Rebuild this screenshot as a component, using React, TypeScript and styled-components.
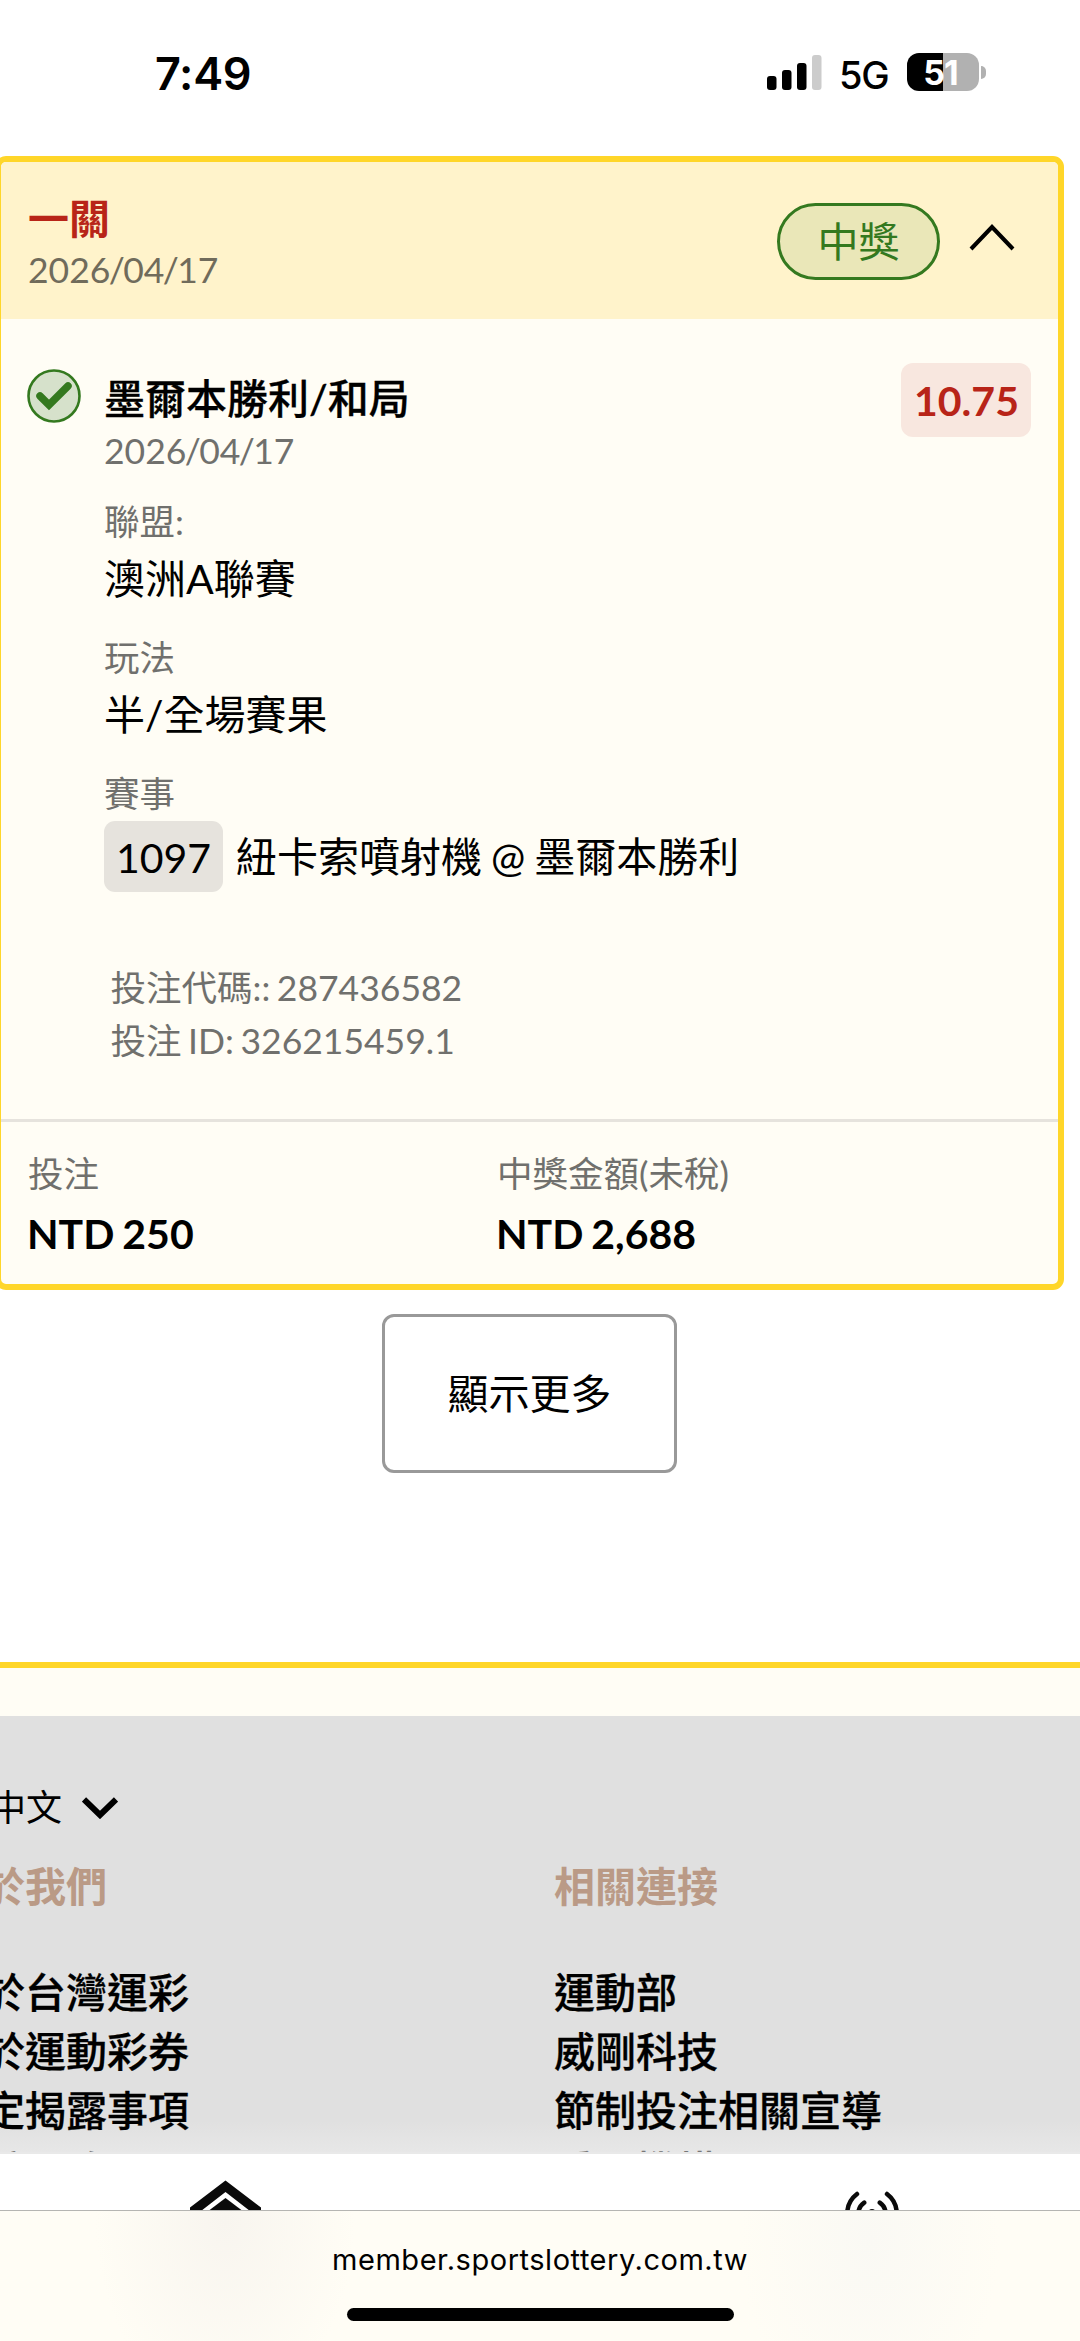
import React from 'react';
import styled, { createGlobalStyle } from 'styled-components';

const cjk = `Lato, "Noto Sans CJK TC", sans-serif`;
const system = `Inter, "Noto Sans CJK TC", sans-serif`;

const GlobalStyle = createGlobalStyle`
  * { box-sizing: border-box; }
  html, body { margin: 0; padding: 0; background: #fff; }
  body { width: 1080px; height: 2341px; overflow: hidden; font-family: ${cjk}; color: #000; }
  p, h2, h3, ul, dl, dt, dd { margin: 0; padding: 0; font-weight: 400; }
  ul { list-style: none; }
`;

const Screen = styled.div`
  width: 1080px;
  height: 2341px;
  display: flex;
  flex-direction: column;
  overflow: hidden;
  background: #fff;
`;

/* Status bar */
const StatusBar = styled.header`
  height: 156px;
  flex: none;
  display: flex;
  justify-content: space-between;
  padding: 48px 94px 0 155px;
  font-family: ${system};
`;
const Clock = styled.time`
  font-size: 45px;
  line-height: 52px;
  font-weight: 600;
  letter-spacing: -0.3px;
`;
const StatusIcons = styled.div`
  display: flex;
  align-items: flex-start;
`;
const Signal = styled.svg`
  margin-top: 7px;
`;
const Network = styled.span`
  margin: 7px 0 0 17px;
  width: 68px;
  font-size: 38px;
  line-height: 40px;
  font-weight: 500;
  letter-spacing: -1.2px;
`;
const Battery = styled.div`
  margin-top: 5px;
  width: 72px;
  height: 38px;
  padding-right: 5px;
  border-radius: 12px;
  display: flex;
  align-items: center;
  justify-content: center;
  background: linear-gradient(90deg, #000 50%, #b1b1b1 50%);
  color: #fff;
  font-size: 34px;
  font-weight: 700;
  letter-spacing: -1px;
`;
const BatteryCap = styled.div`
  margin: 18px 0 0 2px;
  width: 5px;
  height: 13px;
  border-radius: 0 6px 6px 0;
  background: #b1b1b1;
`;

/* Ticket card */
const Card = styled.section`
  flex: none;
  width: 1069px;
  height: 1134px;
  margin-left: -5px;
  border: 6px solid #ffd629;
  border-radius: 11px;
  background: #fffdf5;
  overflow: hidden;
  display: flex;
  flex-direction: column;
`;
const CardHeader = styled.div`
  height: 157px;
  flex: none;
  display: flex;
  align-items: flex-start;
  padding: 33px 42px 0 27px;
  background: #fff3cb;
`;
const HeaderText = styled.div`
  flex: 1;
`;
const TicketType = styled.h2`
  font-size: 41px;
  line-height: 48px;
  font-weight: 700;
  color: #b82418;
`;
const DateText = styled.p<{ $onHeader?: boolean }>`
  font-size: 35.5px;
  height: 52px;
  line-height: 54px;
  color: ${(p) => (p.$onHeader ? '#706b5b' : '#70706d')};
`;
const Slash = styled.span`
  margin: 0 -1.6px;
`;
const StatusPill = styled.span`
  margin-top: 8px;
  width: 163px;
  height: 77px;
  border: 3px solid #34791f;
  border-radius: 39px;
  background: #eae7b8;
  color: #34791f;
  font-size: 41px;
  line-height: 71px;
  text-align: center;
`;
const CollapseIcon = styled.svg`
  margin: 27px 0 0 28px;
`;

const Selection = styled.div`
  display: flex;
  align-items: flex-start;
  padding: 49px 27px 0 26px;
`;
const SelectionBody = styled.div`
  flex: 1;
  padding: 6px 0 0 23px;
`;
const SelectionName = styled.h3`
  font-size: 41px;
  line-height: 50px;
  font-weight: 500;
  -webkit-text-stroke: 0.3px currentColor;
`;
const Odds = styled.span`
  margin-top: -5px;
  width: 130px;
  height: 74px;
  padding-left: 1px;
  border-radius: 12px;
  background: #f8e7df;
  color: #b82418;
  font-size: 41px;
  line-height: 76px;
  font-weight: 700;
  text-align: center;
`;
const Details = styled.dl`
  padding-top: 20px;
  display: flex;
  flex-direction: column;
`;
const Field = styled.div`
  height: 136px;
`;
const Label = styled.dt`
  font-size: 35.5px;
  line-height: 52px;
  color: #70706d;
`;
const Value = styled.dd`
  font-size: 41px;
  line-height: 62px;
`;
const Match = styled(Value)`
  display: flex;
  align-items: center;
  gap: 13px;
  margin-top: 1px;
  word-spacing: -1.5px;
`;
const EventCode = styled.span`
  width: 119px;
  height: 71px;
  flex: none;
  border-radius: 11px;
  background: #e6e3dd;
  text-align: center;
  line-height: 74px;
`;
const Codes = styled.div`
  margin: 69px 0 0 109.5px;
  font-size: 35.5px;
  line-height: 53px;
  word-spacing: -2.5px;
  color: #70706d;
  height: 158px;
`;
const Totals = styled.dl`
  flex: 1;
  display: flex;
  border-top: 3px solid #e6e3dd;
  padding: 26px 0 0 27px;
`;
const Total = styled.div`
  width: 469px;
`;
const Amount = styled.dd`
  font-size: 41px;
  line-height: 67px;
  font-weight: 700;
  word-spacing: -2px;
  margin-left: -1px;
`;

const MoreButton = styled.button`
  flex: none;
  margin: 24px 0 0 382px;
  width: 295px;
  height: 159px;
  padding: 0 0 5px;
  border: 3px solid #999;
  border-radius: 12px;
  background: #fff;
  font-family: ${cjk};
  font-size: 41px;
  color: #000;
`;

/* Footer */
const Strip = styled.div`
  flex: none;
  margin-top: 189px;
  height: 54px;
  border-top: 6px solid #ffd629;
  background: #fffdf5;
`;
const Footer = styled.footer`
  flex: none;
  height: 436px;
  overflow: hidden;
  padding: 63px 0 0;
  background: linear-gradient(#e0e0e0 0 405px, #e7e7e7 436px);
`;
const Language = styled.div`
  display: flex;
  align-items: center;
  gap: 20px;
  margin-left: -10px;
  height: 52px;
  font-size: 36px;
`;
const LanguageArrow = styled.svg`
  margin-top: 5px;
`;
const Columns = styled.div`
  display: grid;
  grid-template-columns: 611px 1fr;
  margin: 26px 0 0 -57px;
`;
const ColumnTitle = styled.h3`
  font-size: 41px;
  line-height: 60px;
  font-weight: 700;
  color: #ba9a86;
  white-space: nowrap;
`;
const Links = styled.ul`
  padding-top: 46px;
  font-size: 41px;
  line-height: 59px;
  font-weight: 500;
  -webkit-text-stroke: 0.3px currentColor;
`;
const LinkItem = styled.li<{ $faded: boolean }>`
  padding-top: ${(p) => (p.$faded ? '1px' : '0')};
  color: ${(p) => (p.$faded ? '#777' : '#000')};
`;

const TabBar = styled.nav`
  flex: none;
  height: 58px;
  overflow: hidden;
  border-top: 2px solid #e9e9e9;
  background: #fff;
  display: flex;
  justify-content: space-between;
  padding: 26px 181px 0 190px;
`;
const AddressBar = styled.div`
  flex: 1;
  display: flex;
  flex-direction: column;
  align-items: center;
  border-top: 1.5px solid #b5b5b2;
  background:
    radial-gradient(ellipse 130px 190px at 225px 10px, #f8f5ef, transparent),
    radial-gradient(ellipse 130px 190px at 870px 30px, #faf9f4, transparent),
    #fffdf5;
  padding-top: 29px;
  font-family: ${system};
`;
const Address = styled.span`
  font-size: 29px;
  line-height: 40px;
  letter-spacing: 0.53px;
`;
const HomeIndicator = styled.div`
  margin-top: 28px;
  width: 387px;
  height: 13px;
  border-radius: 7px;
  background: #000;
`;

const fields = [
  ['聯盟:', '澳洲A聯賽'],
  ['玩法', '半/全場賽果'],
];
const columns = [
  { title: '關於我們', links: ['關於台灣運彩', '關於運動彩券', '法定揭露事項', '客戶服務'] },
  { title: '相關連接', links: ['運動部', '威剛科技', '節制投注相關宣導', '愛心機構'] },
];

function TicketDate({ onHeader }: { onHeader?: boolean }) {
  return (
    <DateText $onHeader={onHeader}>
      2026<Slash>/</Slash>04<Slash>/</Slash>17
    </DateText>
  );
}

export default function App() {
  return (
    <>
      <GlobalStyle />
      <Screen>
        <StatusBar>
          <Clock>7:49</Clock>
          <StatusIcons>
            <Signal width="55" height="36" viewBox="0 0 55 36">
              <rect x="0" y="21" width="9.5" height="14" rx="3" />
              <rect x="15" y="15" width="9.5" height="20" rx="3" />
              <rect x="30" y="8" width="9.5" height="27" rx="3" />
              <rect x="45" y="0" width="9.5" height="35" rx="3" fill="#ccc" />
            </Signal>
            <Network>5G</Network>
            <Battery>51</Battery>
            <BatteryCap />
          </StatusIcons>
        </StatusBar>

        <Card>
          <CardHeader>
            <HeaderText>
              <TicketType>一關</TicketType>
              <TicketDate onHeader />
            </HeaderText>
            <StatusPill>中獎</StatusPill>
            <CollapseIcon width="48" height="30" viewBox="0 0 48 30" fill="none" stroke="#000" strokeWidth="4">
              <path d="M3 27 24 5 45 27" />
            </CollapseIcon>
          </CardHeader>

          <Selection>
            <svg width="54" height="56" viewBox="0 0 54 56" fill="none" stroke="#34791f">
              <circle cx="27" cy="28" r="25.5" fill="#d6e1cb" strokeWidth="2.6" />
              <path d="M13 28 22 37 41 18" strokeWidth="7.5" strokeLinecap="round" />
            </svg>
            <SelectionBody>
              <SelectionName>墨爾本勝利/和局</SelectionName>
              <TicketDate />
              <Details>
                {fields.map(([label, value]) => (
                  <Field key={label}>
                    <Label>{label}</Label>
                    <Value>{value}</Value>
                  </Field>
                ))}
                <div>
                  <Label>賽事</Label>
                  <Match>
                    <EventCode>1097</EventCode>
                    <span>紐卡索噴射機 @ 墨爾本勝利</span>
                  </Match>
                </div>
              </Details>
            </SelectionBody>
            <Odds>10.75</Odds>
          </Selection>

          <Codes>
            <p>投注代碼:: 287436582</p>
            <p>投注 ID: 326215459.1</p>
          </Codes>

          <Totals>
            <Total>
              <Label>投注</Label>
              <Amount>NTD 250</Amount>
            </Total>
            <Total>
              <Label>中獎金額(未稅)</Label>
              <Amount>NTD 2,688</Amount>
            </Total>
          </Totals>
        </Card>

        <MoreButton>顯示更多</MoreButton>

        <Strip />
        <Footer>
          <Language>
            <span>中文</span>
            <LanguageArrow width="36" height="22" viewBox="0 0 36 22" fill="none" stroke="#000" strokeWidth="6">
              <path d="M2 2.5 18 18 34 2.5" />
            </LanguageArrow>
          </Language>
          <Columns>
            {columns.map((column) => (
              <div key={column.title}>
                <ColumnTitle>{column.title}</ColumnTitle>
                <Links>
                  {column.links.map((link, index) => (
                    <LinkItem key={link} $faded={index === 3}>
                      {link}
                    </LinkItem>
                  ))}
                </Links>
              </div>
            ))}
          </Columns>
        </Footer>

        <TabBar>
          <svg width="71" height="60" viewBox="0 0 71 60" fill="#0a0a0a">
            <path d="M0 27.5 35.5 0.5 71 27.5V31H60L35.5 12 11 31H0Z" />
            <path d="M35.5 18 58 35V60H13V35Z" />
          </svg>
          <svg width="54" height="60" viewBox="0 0 54 60" fill="none" stroke="#0a0a0a" strokeWidth="4.5" strokeLinecap="round">
            <path d="M12 14A24.8 24.8 0 0 0 12 53.4M42 14A24.8 24.8 0 0 1 42 53.4" />
            <path d="M19.2 22.6A13.5 13.5 0 0 0 19.2 44.8M34.8 22.6A13.5 13.5 0 0 1 34.8 44.8" />
            <circle cx="27" cy="33.5" r="4.5" fill="#0a0a0a" stroke="none" />
          </svg>
        </TabBar>
        <AddressBar>
          <Address>member.sportslottery.com.tw</Address>
          <HomeIndicator />
        </AddressBar>
      </Screen>
    </>
  );
}
